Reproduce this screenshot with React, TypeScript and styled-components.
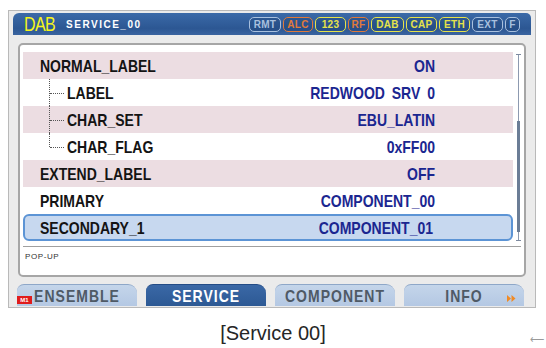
import React from 'react'
import styled, { createGlobalStyle, css } from 'styled-components'

const Global = createGlobalStyle`
  html, body {
    margin: 0;
    padding: 0;
    background: #ffffff;
    font-family: "Liberation Sans", Arial, sans-serif;
  }
`

const tall = css`
  display: inline-block;
  transform: scaleY(1.2);
  transform-origin: center;
`

const Page = styled.div`
  width: 546px;
  height: 348px;
  padding-top: 10px;
  box-sizing: border-box;
  display: flex;
  flex-direction: column;
`

const Frame = styled.div`
  margin-left: 8px;
  width: 528px;
  height: 298px;
  box-sizing: border-box;
  background: #ebebeb;
  border: 1px solid #b9b9b9;
  padding: 2px 4px 0 4px;
  display: flex;
  flex-direction: column;
`

const Header = styled.div`
  height: 22px;
  display: flex;
  align-items: center;
  padding: 0 11px 0 11px;
  background: linear-gradient(#3b6aa8, #2c5793 70%, #3a64a0);
  border-radius: 6px 5px 0 0;
`

const Title = styled.span`
  ${tall}
  transform: scaleY(1.3);
  color: #f6f41a;
  font-size: 16px;
  letter-spacing: -0.6px;
`

const Subtitle = styled.span`
  margin-left: 11px;
  color: #ffffff;
  font-weight: 700;
  font-size: 10px;
  letter-spacing: 1.5px;
`

const Badges = styled.div`
  margin-left: auto;
  display: flex;
  gap: 2px;
`

const Badge = styled.span<{ $c: string; $w: number }>`
  width: ${p => p.$w}px;
  height: 15px;
  box-sizing: border-box;
  border: 1.5px solid ${p => p.$c};
  border-radius: 5px;
  color: ${p => p.$c};
  font-size: 10px;
  font-weight: 700;
  letter-spacing: 0.3px;
  display: flex;
  align-items: center;
  justify-content: center;
  background: rgba(20, 50, 100, 0.25);
`

const Panel = styled.div`
  margin: 8px 5px 0 5px;
  height: 234px;
  box-sizing: border-box;
  background: #ffffff;
  border: 2px solid #a6a6a6;
  border-radius: 5px;
  display: flex;
  flex-direction: column;
`

const ListArea = styled.div`
  display: flex;
  padding: 7px 0 5px 3px;
`

const List = styled.div`
  flex: 1;
  display: flex;
  flex-direction: column;
`

const rowTones = {
  plain: css`
    background: transparent;
  `,
  pink: css`
    background: #ecdde2;
  `,
  selected: css`
    background: #c7d8ef;
    border: 2px solid #5c94d5;
    border-radius: 6px;
    padding-left: 15px;
  `,
}

const Row = styled.div<{ $tone: keyof typeof rowTones; $child?: boolean }>`
  height: 27px;
  box-sizing: border-box;
  display: flex;
  align-items: center;
  padding: 0 78px 0 ${p => (p.$child ? 26 : 17)}px;
  ${p => rowTones[p.$tone]}
`

const Label = styled.span`
  ${tall}
  color: #141414;
  font-size: 14px;
  font-weight: 700;
`

const Value = styled.span`
  ${tall}
  margin-left: auto;
  color: #1b2690;
  font-size: 14px;
  font-weight: 700;
  word-spacing: 3px;
`

const Branch = styled.span<{ $last?: boolean }>`
  position: relative;
  align-self: stretch;
  width: 16px;
  margin-right: 2px;

  &::before {
    content: '';
    position: absolute;
    left: 0;
    top: 0;
    bottom: ${p => (p.$last ? '50%' : '0')};
    border-left: 1px dotted #555;
  }

  &::after {
    content: '';
    position: absolute;
    left: 1px;
    right: 1px;
    top: 50%;
    border-top: 1px dotted #555;
  }
`

const Scroll = styled.div`
  width: 11px;
  padding: 2px 0 0;
  display: flex;
  justify-content: center;
`

const Track = styled.div`
  position: relative;
  width: 1px;
  background: #8d9ab0;
  display: flex;
  flex-direction: column;
  align-items: center;

  &::before,
  &::after {
    content: '';
    position: absolute;
    left: -2px;
    width: 5px;
    height: 1px;
    background: #7d8aa0;
  }
  &::before { top: 0; }
  &::after { bottom: 0; }
`

const Thumb = styled.div`
  width: 3px;
  height: 111px;
  margin-top: 67px;
  background: #6b7d96;
`

const Divider = styled.div`
  height: 1px;
  margin: 0 3px 0 3px;
  background: #a0a0a0;
`

const PopUp = styled.div`
  padding: 5px 0 0 5px;
  font-size: 8px;
  line-height: 10px;
  letter-spacing: 0.6px;
  color: #333333;
`

const Tabs = styled.div`
  margin: 7px 0 0 4px;
  display: flex;
  gap: 9px;
`

const Tab = styled.div<{ $active?: boolean }>`
  position: relative;
  width: 120px;
  height: 22px;
  box-sizing: border-box;
  border-radius: 7px 9px 0 0;
  display: flex;
  align-items: center;
  justify-content: center;
  background: ${p => (p.$active ? 'linear-gradient(#3a68a6, #2d5994)' : 'linear-gradient(#c4d5ea, #b4c8e3)')};
  border-top: 1px solid ${p => (p.$active ? '#244c86' : '#8ea7c8')};
  color: ${p => (p.$active ? '#ffffff' : '#4f5a66')};
`

const TabText = styled.span`
  ${tall}
  transform: scaleY(1.15);
  font-size: 14px;
  font-weight: 700;
  letter-spacing: 1px;
`

const MBadge = styled.span`
  position: absolute;
  left: 0;
  bottom: 2px;
  width: 15px;
  height: 8px;
  background: #e01c1c;
  color: #ffffff;
  font-size: 6px;
  font-weight: 700;
  line-height: 8px;
  text-align: center;
`

const Arrows = styled.svg`
  position: absolute;
  right: 8px;
  top: 10px;
`

const CaptionRow = styled.div`
  margin-top: 13px;
  display: grid;
  grid-template-columns: 1fr auto 1fr;
  align-items: end;
`

const Caption = styled.span`
  grid-column: 2;
  font-size: 20px;
  line-height: 24px;
  color: #262626;
`

const Hint = styled.span`
  justify-self: end;
  margin-right: 2px;
  font-size: 10px;
  color: #9a9a9a;
`

const badges = [
  { t: 'RMT', c: '#a8c0de', w: 32 },
  { t: 'ALC', c: '#e07a3a', w: 30 },
  { t: '123', c: '#e6e24a', w: 31 },
  { t: 'RF', c: '#e07a3a', w: 21 },
  { t: 'DAB', c: '#e6e24a', w: 33 },
  { t: 'CAP', c: '#e6e24a', w: 31 },
  { t: 'ETH', c: '#e6e24a', w: 31 },
  { t: 'EXT', c: '#a8c0de', w: 31 },
  { t: 'F', c: '#a8c0de', w: 15 },
]

type Item = { label: string; value: string; tone: 'plain' | 'pink' | 'selected'; child?: boolean; last?: boolean }

const items: Item[] = [
  { label: 'NORMAL_LABEL', value: 'ON', tone: 'pink' },
  { label: 'LABEL', value: 'REDWOOD SRV 0', tone: 'plain', child: true },
  { label: 'CHAR_SET', value: 'EBU_LATIN', tone: 'pink', child: true },
  { label: 'CHAR_FLAG', value: '0xFF00', tone: 'plain', child: true, last: true },
  { label: 'EXTEND_LABEL', value: 'OFF', tone: 'pink' },
  { label: 'PRIMARY', value: 'COMPONENT_00', tone: 'plain' },
  { label: 'SECONDARY_1', value: 'COMPONENT_01', tone: 'selected' },
]

export default function App() {
  return (
    <Page>
      <Global />
      <Frame>
        <Header>
          <Title>DAB</Title>
          <Subtitle>SERVICE_00</Subtitle>
          <Badges>
            {badges.map(b => (
              <Badge key={b.t} $c={b.c} $w={b.w}>{b.t}</Badge>
            ))}
          </Badges>
        </Header>

        <Panel>
          <ListArea>
            <List>
              {items.map(it => (
                <Row key={it.label} $tone={it.tone} $child={it.child}>
                  {it.child && <Branch $last={it.last} />}
                  <Label>{it.label}</Label>
                  <Value>{it.value}</Value>
                </Row>
              ))}
            </List>
            <Scroll>
              <Track>
                <Thumb />
              </Track>
            </Scroll>
          </ListArea>
          <Divider />
          <PopUp>POP-UP</PopUp>
        </Panel>

        <Tabs>
          <Tab>
            <MBadge>M1</MBadge>
            <TabText>ENSEMBLE</TabText>
          </Tab>
          <Tab $active>
            <TabText>SERVICE</TabText>
          </Tab>
          <Tab>
            <TabText>COMPONENT</TabText>
          </Tab>
          <Tab>
            <TabText>INFO</TabText>
            <Arrows width="9" height="7" viewBox="0 0 9 7">
              <path d="M0 0 L4 3.5 L0 7 Z M4.5 0 L8.5 3.5 L4.5 7 Z" fill="#f08a24" />
            </Arrows>
          </Tab>
        </Tabs>
      </Frame>

      <CaptionRow>
        <Caption>[Service 00]</Caption>
        <Hint>⟵</Hint>
      </CaptionRow>
    </Page>
  )
}
